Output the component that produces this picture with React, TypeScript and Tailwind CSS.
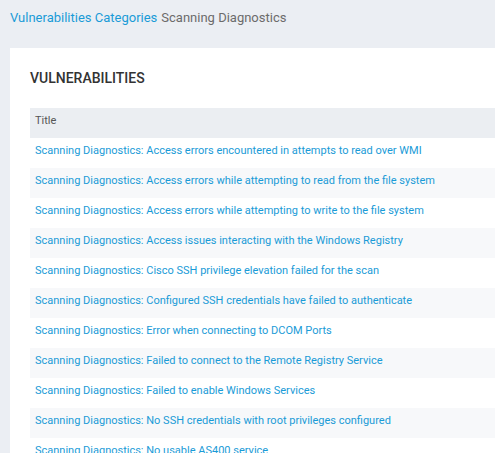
import React from 'react';

const rows = [
  'Scanning Diagnostics: Access errors encountered in attempts to read over WMI',
  'Scanning Diagnostics: Access errors while attempting to read from the file system',
  'Scanning Diagnostics: Access errors while attempting to write to the file system',
  'Scanning Diagnostics: Access issues interacting with the Windows Registry',
  'Scanning Diagnostics: Cisco SSH privilege elevation failed for the scan',
  'Scanning Diagnostics: Configured SSH credentials have failed to authenticate',
  'Scanning Diagnostics: Error when connecting to DCOM Ports',
  'Scanning Diagnostics: Failed to connect to the Remote Registry Service',
  'Scanning Diagnostics: Failed to enable Windows Services',
  'Scanning Diagnostics: No SSH credentials with root privileges configured',
  'Scanning Diagnostics: No usable AS400 service',
];

const App: React.FC = () => {
  return (
    <div className="h-screen bg-[#ebeef3] font-['Roboto',sans-serif] overflow-hidden">
      <div className="h-[35px] px-[10px] flex items-center text-[13px]">
        <a className="text-[#1a9bd7]">Vulnerabilities Categories</a>
        <span className="ml-[4px] text-[#6b6b6b]">Scanning Diagnostics</span>
      </div>
      <div className="ml-[10px] mt-[13px] w-[600px] bg-white pt-[20px] px-[20px]">
        <h2 className="h-[20px] leading-[20px] text-[14px] font-medium text-[#333] uppercase">Vulnerabilities</h2>
        <div className="mt-[20px] text-[11px]">
          <div className="h-[30px] pb-[4px] px-[5px] flex items-center bg-[#ebeef2] text-[#555]">Title</div>
          {rows.map((r, i) => (
            <div
              key={i}
              className={`h-[30px] pb-[4px] px-[5px] flex items-center whitespace-nowrap ${i % 2 === 1 ? 'bg-[#f7f8fa]' : 'bg-white'}`}
            >
              <a className="text-[#1a9bd7]">{r}</a>
            </div>
          ))}
        </div>
      </div>
    </div>
  );
};

export default App;
